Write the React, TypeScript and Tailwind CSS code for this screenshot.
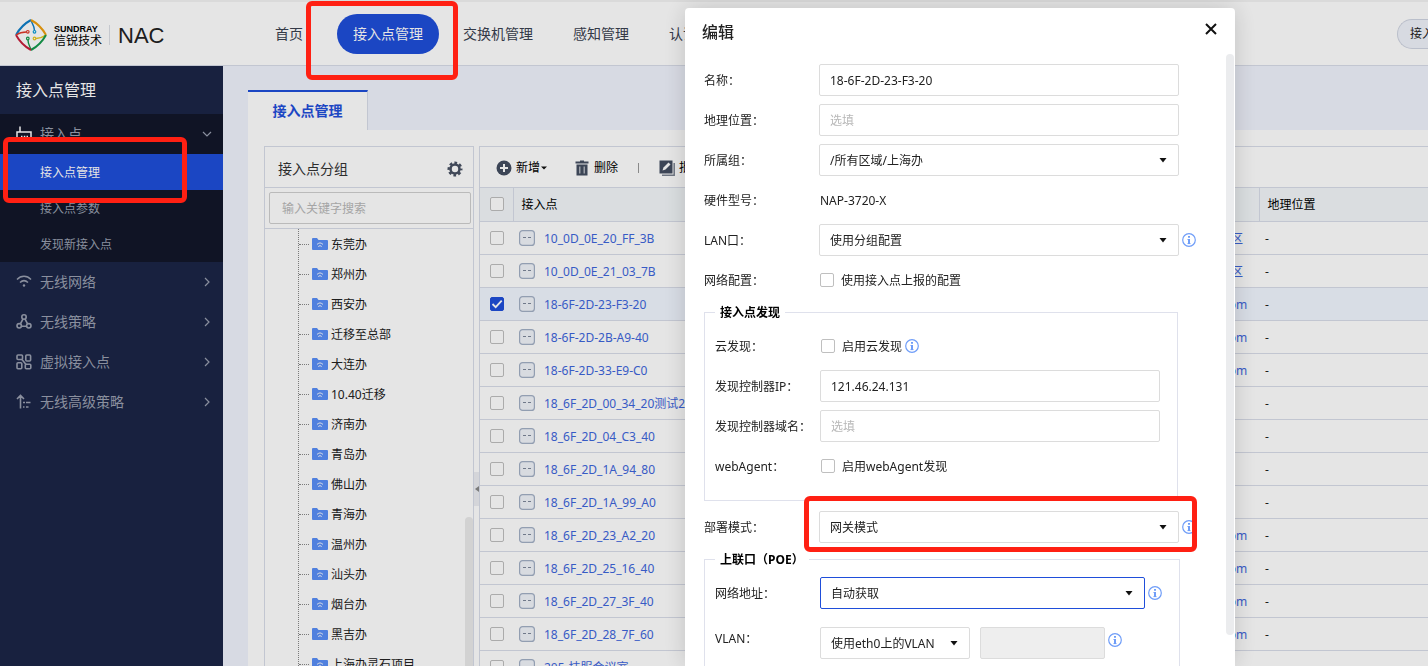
import { useId } from "react";
import type { ReactNode } from "react";
import clsx from "clsx";

const navItems = ["首页", "接入点管理", "交换机管理", "感知管理", "认证管理"];

const subMenu = ["接入点管理", "接入点参数", "发现新接入点"];

const groups = [
  "东莞办", "郑州办", "西安办", "迁移至总部", "大连办", "10.40迁移", "济南办",
  "青岛办", "佛山办", "青海办", "温州办", "汕头办", "烟台办", "黑吉办", "上海办灵石项目",
];

const rows = [
  { name: "10_0D_0E_20_FF_3B", domain: "无线控制器专区" },
  { name: "10_0D_0E_21_03_7B", domain: "无线控制器专区" },
  { name: "18-6F-2D-23-F3-20", domain: "ac.sundray.com", checked: true },
  { name: "18-6F-2D-2B-A9-40", domain: "ac.sundray.com" },
  { name: "18-6F-2D-33-E9-C0", domain: "ac.sundray.com" },
  { name: "18_6F_2D_00_34_20测试2", domain: "" },
  { name: "18_6F_2D_04_C3_40", domain: "" },
  { name: "18_6F_2D_1A_94_80", domain: "" },
  { name: "18_6F_2D_1A_99_A0", domain: "" },
  { name: "18_6F_2D_23_A2_20", domain: "ac.sundray.com" },
  { name: "18_6F_2D_25_16_40", domain: "ac.sundray.com" },
  { name: "18_6F_2D_27_3F_40", domain: "ac.sundray.com" },
  { name: "18_6F_2D_28_7F_60", domain: "ac.sundray.com" },
  { name: "205-技服会议室", domain: "" },
];

function Logo() {
  return (
    <svg viewBox="0 0 32 32" className="h-8 w-8" fill="none" strokeWidth="1.400">
      <path d="M16 1c0.500 3 3.300 5 3.500 10.500" stroke="#0f7fc9" />
      <path d="M1 16Q6.500 6 16 1" stroke="#0f7fc9" strokeWidth="2" />
      <path d="M16 1q9.500 5 15 15" stroke="#f0a010" strokeWidth="2" />
      <path d="M31 16c-3 2-4.500 3.500-10 3.500" stroke="#e8c820" />
      <path d="M31 16q-5.500 10-15 15" stroke="#159a4c" strokeWidth="2" />
      <path d="M16 31c-0.500-3-3-5-3-10" stroke="#159a4c" />
      <path d="M16 31Q6.500 26 1 16" stroke="#c8203c" strokeWidth="2" />
      <path d="M1 16c3-2 5-3 10.500-3" stroke="#e03a2a" />
      <circle cx="12.800" cy="12.800" r="1.300" stroke="#e03a2a" strokeWidth="1.200" />
      <circle cx="19.500" cy="12.800" r="1.300" stroke="#0f9fd9" strokeWidth="1.200" />
      <circle cx="12.800" cy="19.500" r="1.300" stroke="#159a4c" strokeWidth="1.200" />
      <circle cx="19.500" cy="19.500" r="1.300" stroke="#e8c820" strokeWidth="1.200" />
    </svg>
  );
}

function RouterIcon() {
  return (
    <svg viewBox="0 0 16 16" className="h-4 w-4" fill="none" stroke="#fff" strokeWidth="1.500">
      <path d="M4 0.500V6M1 15V6h14v9z" />
      <path d="M5 10.500h1.500M7.800 10.500h1.500M10.500 10.500h1.500" />
    </svg>
  );
}

function WifiIcon() {
  return (
    <svg viewBox="0 0 16 16" className="h-4 w-4" fill="none" stroke="currentColor" strokeWidth="1.500">
      <path d="M1 5.500C5 1.300 11 1.300 15 5.500M4 8.500c2.500-2.300 5.500-2.300 8 0" />
      <circle cx="8" cy="11.500" r="1.200" fill="currentColor" stroke="none" />
    </svg>
  );
}

function PolicyIcon() {
  return (
    <svg viewBox="0 0 16 16" className="h-4 w-4" fill="none" stroke="currentColor" strokeWidth="1.600">
      <circle cx="8" cy="3" r="2.200" />
      <circle cx="3.200" cy="11.800" r="2.200" />
      <circle cx="12.800" cy="11.800" r="2.200" />
      <path d="M7 5 4.400 9.800M9 5l2.600 4.800M5.500 12.300h5" />
    </svg>
  );
}

function VirtualIcon() {
  return (
    <svg viewBox="0 0 16 16" className="h-4 w-4" fill="none" stroke="currentColor" strokeWidth="1.600">
      <rect x="1" y="1" width="5.500" height="4.500" rx="1" />
      <rect x="9.800" y="1" width="4.800" height="6" rx="1" />
      <rect x="1" y="8.700" width="4.800" height="6" rx="1" />
      <rect x="9.300" y="10.200" width="5.500" height="4.500" rx="1" />
      <path d="M6 5.500 10 10.500" />
    </svg>
  );
}

function AdvancedIcon() {
  return (
    <svg viewBox="0 0 16 16" className="h-4 w-4" fill="none" stroke="currentColor" strokeWidth="1.600">
      <path d="M4.500 14.500V1.500M1 5l3.500-3.500L8 5M7 8.500h2M10 8.500h4.500M7 13h1.500M10 13h2.500" />
    </svg>
  );
}

const menuItems = [
  { label: "无线网络", icon: <WifiIcon /> },
  { label: "无线策略", icon: <PolicyIcon /> },
  { label: "虚拟接入点", icon: <VirtualIcon /> },
  { label: "无线高级策略", icon: <AdvancedIcon /> },
];

function Chevron({ open = false }: { open?: boolean }) {
  return (
    <svg viewBox="0 0 10 10" className="h-2.5 w-2.5" fill="none" stroke="#9aa0b0" strokeWidth="1.200">
      <path d={open ? "M1 3l4 4 4-4" : "M3 1l4 4-4 4"} />
    </svg>
  );
}

function FolderIcon() {
  return (
    <svg viewBox="0 0 16 12" className="h-3 w-4">
      <path d="M0 1a1 1 0 0 1 1-1h4l1.500 2H15a1 1 0 0 1 1 1v8a1 1 0 0 1-1 1H1a1 1 0 0 1-1-1z" fill="#5a8ff8" />
      <path d="M5 6.500c2-2 4-2 6 0M6.300 8.500c1.200-1 2.200-1 3.400 0" stroke="#fff" fill="none" />
    </svg>
  );
}

function GearIcon() {
  return (
    <svg viewBox="0 0 16 16" className="h-4 w-4" fill="none" stroke="#485163">
      <circle cx="8" cy="8" r="4.500" strokeWidth="2.600" />
      <circle cx="8" cy="8" r="6.300" strokeWidth="2.400" strokeDasharray="2.700 2.248" strokeDashoffset="1.350" />
    </svg>
  );
}

function InfoIcon() {
  return (
    <svg viewBox="0 0 14 14" className="h-3.5 w-3.5 shrink-0" fill="none" stroke="#6f9df8">
      <circle cx="7" cy="7" r="6.300" strokeWidth="1.200" />
      <path d="M7 3v1.800M7 6v5" strokeWidth="2" />
      <path d="M5.500 6.500h1.500M5.500 10.600h3" />
    </svg>
  );
}

function DeviceIcon() {
  return (
    <svg viewBox="0 0 16 16" className="h-4 w-4 shrink-0" fill="none">
      <rect x="0.600" y="0.600" width="14.800" height="14.800" rx="3" fill="#f1f4fa" stroke="#a3b0c6" strokeWidth="1.200" />
      <path d="M4 7.500h3M9 7.500h3" stroke="#7d879a" />
    </svg>
  );
}

type CheckProps = { id?: string; label?: string; checked?: boolean };

function Checkbox({ id, label, checked = false }: CheckProps) {
  return (
    <span className="relative block h-3.5 w-3.5 shrink-0">
      <input
        id={id}
        type="checkbox"
        aria-label={label}
        defaultChecked={checked}
        className="peer block h-3.5 w-3.5 appearance-none rounded-xs border border-[#bfbfbf] bg-white checked:border-[#1f4eda] checked:bg-[#1f4eda]"
      />
      <svg
        viewBox="0 0 14 14"
        className="pointer-events-none absolute inset-0 hidden h-3.5 w-3.5 peer-checked:block"
        fill="none"
        stroke="#fff"
        strokeWidth="1.800"
      >
        <path d="M2.500 7l3.200 3.200 6-6.500" />
      </svg>
    </span>
  );
}

function CheckLabel({ id, text }: { id: string; text: string }) {
  return (
    <label htmlFor={id} className="flex items-center gap-[7px] pl-px">
      <Checkbox id={id} />
      <span className="pt-0.5">{text}</span>
    </label>
  );
}

type SelectProps = { id: string; value: string; className?: string; active?: boolean };

function Select({ id, value, className, active }: SelectProps) {
  return (
    <div className={clsx("relative", className)}>
      <select
        id={id}
        className={clsx(
          "block h-8 w-full appearance-none rounded-xs border bg-white px-2.5 pt-0.5 text-xs outline-none",
          active ? "border-[#1f4eda]" : "border-[#dcdcdc]"
        )}
      >
        <option>{value}</option>
      </select>
      <svg viewBox="0 0 8 5" className="pointer-events-none absolute top-3.5 right-3 h-[5px] w-2">
        <path d="M0.500 0h7L4 4.500z" fill="#111" />
      </svg>
    </div>
  );
}

type FieldProps = {
  label: string;
  inset?: boolean;
  raised?: boolean;
  children: (id: string) => ReactNode;
};

function Field({ label, inset, raised, children }: FieldProps) {
  const id = useId();
  return (
    <div className={clsx("mb-2 flex h-8", raised ? "items-start" : "items-center")}>
      <label
        htmlFor={id}
        className={clsx("shrink-0", inset ? "w-[105px]" : "w-[115px]", raised ? "leading-6" : "pt-0.5")}
      >
        {label}
      </label>
      {children(id)}
    </div>
  );
}

const textBox = "h-8 rounded-xs border border-[#dcdcdc] bg-white px-2.5 text-xs outline-none placeholder:text-[#b8b8b8]";

function Mark({ className }: { className: string }) {
  return (
    <span
      className={clsx("pointer-events-none absolute z-30 rounded-md border-5 border-[#ff2013]", className)}
    />
  );
}

function Header() {
  return (
    <header className="flex h-[66px] items-center border-t-2 border-b border-t-[#f3f3f3] border-b-[#d9dde9] bg-white">
      <div className="flex w-[259px] shrink-0 items-center pt-0.5 pl-[15px]">
        <Logo />
        <div className="ml-[7px] w-[55px] text-black">
          <div className="pt-0.5 font-[Arial,'Liberation_Sans',sans-serif] text-[9px] leading-[9px] font-bold">
            SUNDRAY
          </div>
          <div className="text-xs leading-[13px]">信锐技术</div>
        </div>
        <span className="h-5 w-px bg-[#dcdfe6]" />
        <span className="ml-2 pt-0.5 font-[Arial,'Liberation_Sans',sans-serif] text-[22px] text-[#222]">NAC</span>
      </div>
      <nav className="flex min-w-0 items-center gap-2 text-sm whitespace-nowrap">
        {navItems.map((item, i) => (
          <div key={item} className={clsx("relative", i === 0 && "mr-2.5")}>
            <a
              href="#"
              className={clsx(
                "flex h-10 items-center rounded-full px-4",
                i === 1 ? "bg-[#1f4eda] text-white" : "text-[#3a4150]"
              )}
            >
              {item}
            </a>
            {i === 1 && <Mark className="-top-[13px] -left-[31px] h-[79px] w-[152px]" />}
          </div>
        ))}
      </nav>
      <button className="ml-auto h-[30px] w-[31px] shrink-0 overflow-hidden rounded-l-full border border-r-0 border-[#d0d5e2] bg-[#f0f3fb] pl-3 text-left text-xs whitespace-nowrap">
        接入点
      </button>
    </header>
  );
}

function Sidebar() {
  return (
    <aside className="w-[223px] shrink-0 bg-[#1b2547] text-sm text-[#9aa0b0]">
      <h1 className="flex h-12 items-center pl-4 text-base text-white">接入点管理</h1>
      <div className="relative bg-[#12172a]">
        <a href="#" className="flex h-10 items-center pr-[11px] pl-4">
          <RouterIcon />
          <span className="ml-2 flex-1">接入点</span>
          <Chevron open />
        </a>
        {subMenu.map((item, i) => (
          <a
            key={item}
            href="#"
            className={clsx("flex h-9 items-center pt-0.5 pl-10 text-xs", i === 0 && "bg-[#1f4eda] text-white")}
          >
            {item}
          </a>
        ))}
        <Mark className="top-[23px] left-[3px] h-[66px] w-[184px]" />
      </div>
      {menuItems.map((item) => (
        <a key={item.label} href="#" className="flex h-10 items-center pr-[11px] pl-4">
          {item.icon}
          <span className="ml-2 flex-1">{item.label}</span>
          <Chevron />
        </a>
      ))}
    </aside>
  );
}

function GroupPanel() {
  return (
    <section className="relative flex w-[210px] shrink-0 flex-col border border-b-0 border-[#d9dde9]">
      <div className="flex h-[41px] shrink-0 items-center justify-between border-b border-[#d9dde9] pt-1 pr-2.5 pl-[13px] text-sm text-[#333]">
        接入点分组
        <button aria-label="设置">
          <GearIcon />
        </button>
      </div>
      <div className="shrink-0 border-b border-[#d9dde9] p-1 pr-0.5">
        <input
          type="text"
          aria-label="搜索"
          placeholder="输入关键字搜索"
          className="block h-8 w-full rounded-xs border border-[#d0d0d0] bg-white px-3 text-xs outline-none placeholder:text-[#b8b8b8]"
        />
      </div>
      <ul className="ml-[33px] min-h-0 flex-1 overflow-hidden border-l border-dotted border-[#888]">
        {groups.map((group) => (
          <li key={group} className="flex h-[30px] items-center text-xs whitespace-nowrap">
            <span className="mr-[3px] w-2.5 border-t border-dotted border-[#888]" />
            <FolderIcon />
            <span className="ml-[3px] pt-0.5">{group}</span>
          </li>
        ))}
      </ul>
      <div className="absolute right-0 bottom-0 h-[149px] w-2 rounded-t-full bg-[#eaeaea]" />
    </section>
  );
}

function Toolbar() {
  return (
    <div className="flex h-[41px] items-center border-b border-[#d9dde9] pt-0.5 pl-4 text-xs whitespace-nowrap text-black">
      <button className="flex items-center gap-1">
        <svg viewBox="0 0 16 16" className="h-4 w-4">
          <circle cx="8" cy="8" r="7.500" fill="#434d60" />
          <path d="M8 4v8M4 8h8" stroke="#fff" strokeWidth="2" />
        </svg>
        新增
      </button>
      <svg viewBox="0 0 6 4" className="ml-px h-1 w-1.5">
        <path d="M0 0.500h6L3 3.500z" fill="#111" />
      </svg>
      <button className="ml-7 flex items-center gap-[5px]">
        <svg viewBox="0 0 14 16" className="h-4 w-3.5">
          <path d="M0.500 1.500h4.500V0.500h4v1h4.500v2h-13zM1.500 4.500h11V15.500h-11z" fill="#434d60" />
          <path d="M4.800 6.500v7M9.200 6.500v7" stroke="#c9ccd3" strokeWidth="1.200" />
        </svg>
        删除
      </button>
      <span className="mx-5 h-2.5 w-px bg-[#999]" />
      <button className="flex items-center gap-1">
        <svg viewBox="0 0 16 16" className="h-4 w-4">
          <path d="M15.200 3v12.200H3" stroke="#7a8290" strokeWidth="1.500" fill="none" />
          <path d="M0.500 0.500h13v13h-13z" fill="#434d60" />
          <path d="M3.500 10.500l1-3 5-5 2 2-5 5z" fill="#fff" />
        </svg>
        批量编辑
      </button>
    </div>
  );
}

function DeviceTable() {
  return (
    <section className="min-w-0 flex-1 overflow-hidden border-t border-l border-[#d9dde9]">
      <Toolbar />
      <table className="w-full table-fixed text-left text-xs whitespace-nowrap">
        <colgroup>
          <col className="w-[33px]" />
          <col />
          <col className="w-[108px]" />
          <col className="w-[169px]" />
        </colgroup>
        <thead>
          <tr className="h-[33px] border-b border-[#d9dde9] bg-[#f3f7fa] text-black">
            <th className="pl-2.5">
              <Checkbox label="全选" />
            </th>
            <th className="border-l border-[#d9dde9] pt-0.5 pl-2 font-normal">接入点</th>
            <th className="border-l border-[#d9dde9] pt-0.5 pl-2 font-normal">控制器</th>
            <th className="border-l border-[#d9dde9] pt-0.5 pl-2 font-normal">地理位置</th>
          </tr>
        </thead>
        <tbody>
          {rows.map((row) => (
            <tr key={row.name} className={clsx("h-[33px] border-b border-[#d9dde9]", row.checked && "bg-[#f1f6ff]")}>
              <td className="pl-2.5">
                <Checkbox label={row.name} checked={row.checked} />
              </td>
              <td className="pl-1.5">
                <a href="#" className="flex items-center gap-[9px] text-[#3e66dc]">
                  <DeviceIcon />
                  <span className="pt-0.5">{row.name}</span>
                </a>
              </td>
              <td className="pt-0.5 pl-2 text-[#3e66dc]">{row.domain}</td>
              <td className="pt-0.5 pl-1.5">-</td>
            </tr>
          ))}
        </tbody>
      </table>
    </section>
  );
}

function EditDialog() {
  return (
    <div className="fixed inset-0 z-20 flex items-stretch justify-end pt-2 pr-[193px]">
      <div
        role="dialog"
        aria-label="编辑"
        className="relative w-[550px] overflow-hidden rounded-t bg-white shadow-[0_0_24px_rgba(0,0,0,0.16)]"
      >
        <div className="flex h-12 justify-between pr-[18px] pl-[17px]">
          <h2 className="pt-3 text-base font-medium text-[#222]">编辑</h2>
          <button aria-label="关闭" className="h-[42px]">
            <svg viewBox="0 0 12 12" className="h-3 w-3" stroke="#111" strokeWidth="2">
              <path d="M1 1l10 10M11 1L1 11" />
            </svg>
          </button>
        </div>
        <div className="absolute top-[46px] right-px h-[581px] w-2 rounded-full bg-[#ebecee]" />
        <form className="pt-2 pl-[19px] text-xs text-[#222]">
          <Field label="名称：">
            {(id) => <input id={id} type="text" defaultValue="18-6F-2D-23-F3-20" className={clsx(textBox, "w-[360px]")} />}
          </Field>
          <Field label="地理位置：">
            {(id) => <input id={id} type="text" placeholder="选填" className={clsx(textBox, "w-[360px]")} />}
          </Field>
          <Field label="所属组：">{(id) => <Select id={id} value="/所有区域/上海办" className="w-[360px]" />}</Field>
          <Field label="硬件型号：">
            {(id) => (
              <output id={id} className="pt-0.5 pl-px">
                NAP-3720-X
              </output>
            )}
          </Field>
          <Field label="LAN口：">
            {(id) => (
              <>
                <Select id={id} value="使用分组配置" className="mr-[3px] w-[360px]" />
                <InfoIcon />
              </>
            )}
          </Field>
          <Field label="网络配置：">{(id) => <CheckLabel id={id} text="使用接入点上报的配置" />}</Field>

          <fieldset className="mb-2.5 w-[474px] border border-[#dfe1ec] px-2.5 pt-2.5 pb-2.5">
            <legend className="h-4 px-[5px] leading-[18px] font-bold text-black">接入点发现</legend>
            <Field label="云发现：" inset>
              {(id) => (
                <div className="flex items-center gap-[3px]">
                  <CheckLabel id={id} text="启用云发现" />
                  <InfoIcon />
                </div>
              )}
            </Field>
            <Field label="发现控制器IP：" inset>
              {(id) => <input id={id} type="text" defaultValue="121.46.24.131" className={clsx(textBox, "w-[340px]")} />}
            </Field>
            <Field label="发现控制器域名：" inset>
              {(id) => <input id={id} type="text" placeholder="选填" className={clsx(textBox, "w-[340px]")} />}
            </Field>
            <Field label="webAgent：" inset>
              {(id) => <CheckLabel id={id} text="启用webAgent发现" />}
            </Field>
          </fieldset>

          <div className="relative">
            <Field label="部署模式：">
              {(id) => (
                <>
                  <Select id={id} value="网关模式" className="mr-[3px] w-[360px]" />
                  <InfoIcon />
                </>
              )}
            </Field>
            <Mark className="-top-[15px] left-[100px] h-14 w-[393px]" />
          </div>

          <fieldset className="w-[476px] border border-[#dfe1ec] px-2.5 pt-2.5 pb-10">
            <legend className="h-4 px-[5px] leading-[18px] font-bold text-black">上联口（POE）</legend>
            <Field label="网络地址：" inset>
              {(id) => (
                <>
                  <Select id={id} value="自动获取" active className="mr-[3px] w-[325px]" />
                  <InfoIcon />
                </>
              )}
            </Field>
            <div className="pt-2.5">
              <Field label="VLAN：" inset raised>
                {(id) => (
                  <>
                    <Select id={id} value="使用eth0上的VLAN" className="mr-2.5 w-[150px]" />
                    <input
                      type="text"
                      aria-label="VLAN ID"
                      disabled
                      className="mr-[3px] h-8 w-[125px] rounded-xs border border-[#dcdcdc] bg-[#eee] px-2.5"
                    />
                    <span className="pt-1.5">
                      <InfoIcon />
                    </span>
                  </>
                )}
              </Field>
            </div>
          </fieldset>
        </form>
      </div>
    </div>
  );
}

export default function App() {
  return (
    <div className="flex h-screen flex-col overflow-hidden bg-[#f0f3fd] font-['Noto_Sans','Noto_Sans_CJK_SC',sans-serif] text-[#222]">
      <Header />
      <div className="flex min-h-0 flex-1">
        <Sidebar />
        <main className="flex min-w-0 flex-1 flex-col pt-6 pl-[25px]">
          <div className="flex">
            <a
              href="#"
              className="flex h-10 w-[120px] items-center justify-center border-t-2 border-r border-t-[#1f4eda] border-r-[#d9dde9] bg-white text-sm font-bold text-[#1f4eda]"
            >
              接入点管理
            </a>
          </div>
          <div className="flex min-h-0 flex-1 bg-white pt-4 pl-4">
            <GroupPanel />
            <div className="relative w-[5px] shrink-0">
              <button
                aria-label="收起"
                className="absolute top-[326px] left-0 flex h-[34px] w-[5px] items-center justify-center bg-[#eceef2]"
              >
                <svg viewBox="0 0 4 6" className="h-1.5 w-1">
                  <path d="M4 0v6L0 3z" fill="#888" />
                </svg>
              </button>
            </div>
            <DeviceTable />
          </div>
        </main>
      </div>
      <div className="pointer-events-none fixed inset-0 z-10 bg-black/10" />
      <EditDialog />
    </div>
  );
}
